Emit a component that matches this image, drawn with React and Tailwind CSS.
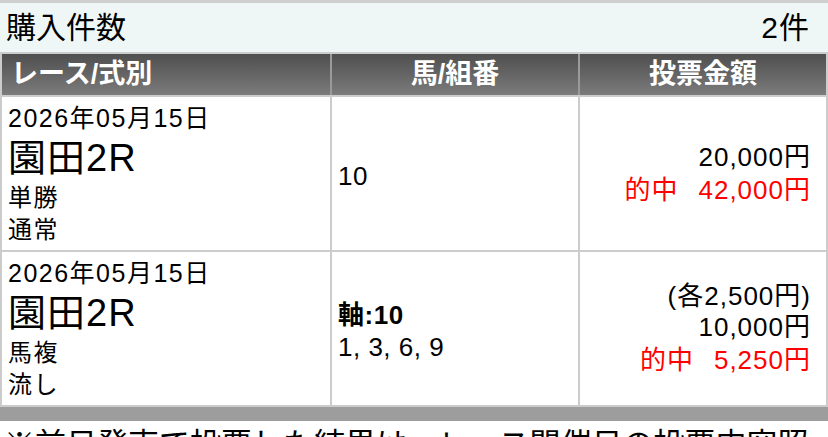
import React from "react";

const rows = [
  {
    date: "2026年05月15日",
    race: "園田2R",
    type: "単勝",
    method: "通常",
    axis: null,
    horses: "10",
    each: null,
    amount: "20,000円",
    hit: "42,000円",
  },
  {
    date: "2026年05月15日",
    race: "園田2R",
    type: "馬複",
    method: "流し",
    axis: "10",
    horses: "1, 3, 6, 9",
    each: "(各2,500円)",
    amount: "10,000円",
    hit: "5,250円",
  },
];

export default function App() {
  return (
    <div
      className="w-[828px] min-h-screen bg-white text-black"
      style={{ fontFamily: '"Liberation Sans", "Noto Sans CJK JP", sans-serif' }}
    >
      <div className="border-t-[3px] border-[#cfcfcf] bg-[#eff7f6] h-[52px] flex items-center justify-between pl-[6px] pr-[18px] text-[30px]">
        <span>購入件数</span>
        <span className="tracking-[1px]">2件</span>
      </div>

      <div className="border-2 border-[#cccccc] border-b-0">
        <div className="grid grid-cols-[328px_2px_246px_2px_1fr] h-[41px] bg-linear-to-b from-[#4f4f4f] to-[#7c7c7c] text-white text-[27px] font-bold">
          <div className="flex items-center pl-[9px]">レース/式別</div>
          <div className="bg-[#9a9a9a]"></div>
          <div className="flex items-center justify-center">馬/組番</div>
          <div className="bg-[#9a9a9a]"></div>
          <div className="flex items-center justify-center">投票金額</div>
        </div>

        {rows.map((r, i) => (
          <div
            key={i}
            className="grid grid-cols-[328px_2px_246px_2px_1fr] border-t-2 border-[#cccccc]"
          >
            <div className="pl-[6px] pt-[5px] pb-[4px] tracking-[1.5px]">
              <div className="text-[25px] leading-[32px]">{r.date}</div>
              <div className="text-[38px] leading-[48px] tracking-[1px]">{r.race}</div>
              <div className="text-[24px] leading-[32px]">{r.type}</div>
              <div className="text-[24px] leading-[32px]">{r.method}</div>
            </div>
            <div className="bg-[#cccccc]"></div>
            <div className="flex flex-col justify-center pl-[6px] pt-[4px] text-[26px] leading-[32px] tracking-[0.5px]">
              {r.axis && <div className="font-bold">軸:{r.axis}</div>}
              <div>{r.horses}</div>
            </div>
            <div className="bg-[#cccccc]"></div>
            <div className="flex flex-col justify-center items-end pr-[15px] text-[26px] leading-[31px] tracking-[1px]">
              {r.each && <div>{r.each}</div>}
              <div>{r.amount}</div>
              <div className="text-[#ff0000] mt-[2px]">
                的中<span className="ml-[20px]">{r.hit}</span>
              </div>
            </div>
          </div>
        ))}
      </div>

      <div className="h-[16px] bg-[#9d9d9d] border-t-2 border-[#cccccc]"></div>
      <div className="px-[4px] pt-[2px] text-[31px] leading-[44px]">
        ※前日発売で投票した結果は、レース開催日の投票内容照会でご確認ください。
      </div>
    </div>
  );
}
